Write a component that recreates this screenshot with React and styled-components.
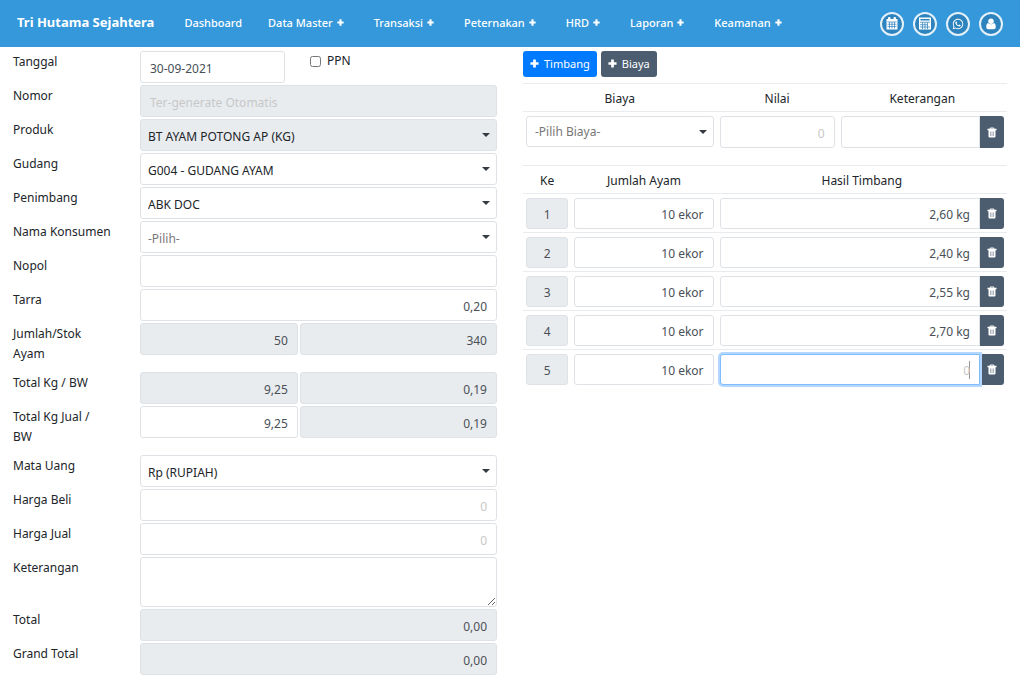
import React, { useState } from "react";
import styled, { createGlobalStyle, css } from "styled-components";
import { FaWhatsapp } from "react-icons/fa";

const GlobalStyle = createGlobalStyle`
  *, *::before, *::after {
    box-sizing: border-box;
  }
  body {
    margin: 0;
    background: #fff;
    color: #212529;
    font-family: "Noto Sans", "Open Sans", sans-serif;
    font-size: 12px;
    line-height: 20px;
  }
  input, select, textarea, button {
    font-family: inherit;
  }
`;

const Navbar = styled.header`
  display: flex;
  align-items: center;
  min-height: 47px;
  padding: 0 17px;
  background: #3498db;
`;
const Brand = styled.a`
  margin-right: 17px;
  padding-bottom: 3px;
  color: #fff;
  font-size: 13px;
  font-weight: 700;
  text-decoration: none;
  white-space: nowrap;
`;
const Menu = styled.nav`
  display: flex;
  flex: 1;
  padding-bottom: 2px;
`;
const MenuLink = styled.a`
  display: flex;
  align-items: center;
  gap: 4px;
  padding: 0 ${(props) => (props.$dropdown ? 17 : 13)}px 0 13px;
  color: #fff;
  font-size: 11px;
  font-weight: 500;
  text-decoration: none;
  white-space: nowrap;
`;
const RoundButtons = styled.div`
  display: flex;
  gap: 9px;
`;
const RoundButton = styled.button`
  display: flex;
  align-items: center;
  justify-content: center;
  width: 24px;
  height: 24px;
  padding: 0;
  border: 2px solid #e4f1fa;
  border-radius: 50%;
  background: #2d83bd;
  color: #fff;
`;

const Page = styled.main`
  display: grid;
  grid-template-columns: minmax(0, 1fr) minmax(0, 1fr);
  gap: 26px;
  padding: 4px 13px;
`;

const Row = styled.div`
  display: grid;
  grid-template-columns: 127px minmax(0, 1fr);
  align-items: start;
`;
const Label = styled.label`
  padding: 1px 13px 0 0;
  margin-bottom: 8px;
  white-space: pre-line;
`;
const Fields = styled.div`
  display: flex;
  gap: 2px;
  margin-bottom: 2px;
`;
const SplitFields = styled.div`
  display: grid;
  grid-template-columns: 4fr 5fr;
  gap: 2px;
  width: 100%;
`;
const control = css`
  width: 100%;
  min-width: 0;
  border: 1px solid #dee2e6;
  border-radius: 3px;
  background: #fff;
  color: #495057;
  font-size: 12px;
  line-height: 20px;
  outline: 0;
  &::placeholder {
    color: #c8c8c8;
    opacity: 1;
  }
  &:focus {
    position: relative;
    border-color: #80bdff;
    box-shadow: 0 0 0 2px #b3d7ff;
  }
  &:disabled,
  &:read-only:not(select) {
    background: #e9ecef;
    opacity: 1;
  }
`;
const Input = styled.input`
  ${control}
  height: ${(props) => (props.$compact ? 31 : 32)}px;
  padding: 2px 9px 0;
  text-align: ${(props) => props.$align || "left"};
`;
const WeightInput = styled(Input)`
  caret-color: transparent;
  &:focus {
    background: linear-gradient(#999, #999) right 9px center / 1px 18px no-repeat #fff;
  }
`;
const DateInput = styled(Input)`
  width: 145px;
`;
const TextArea = styled.textarea`
  ${control}
  display: block;
  height: 50px;
  padding: 4px 9px;
`;
const SelectWrap = styled.div`
  position: relative;
  width: 100%;
  &::after {
    content: "";
    position: absolute;
    top: 14px;
    right: 7px;
    border: 4px solid transparent;
    border-top-color: #343a40;
    border-bottom: 0;
    pointer-events: none;
  }
`;
const SelectBox = styled.select`
  ${control}
  display: block;
  height: ${(props) => (props.$compact ? 31 : 32)}px;
  padding: ${(props) => (props.$compact ? "0 20px 0 8px" : "4px 20px 0 7px")};
  color: ${(props) => (props.$muted ? "#777" : "#212529")};
  appearance: none;
`;
const CheckLabel = styled.label`
  display: flex;
  align-items: center;
  gap: 6px;
  height: 20px;
  margin-left: 23px;
`;
const Checkbox = styled.input`
  width: 11px;
  height: 11px;
  margin: 0;
`;

const Actions = styled.div`
  display: flex;
  gap: 4px;
  margin-bottom: 6px;
`;
const Button = styled.button`
  display: flex;
  align-items: center;
  gap: 5px;
  height: 26px;
  padding: 0 7px 1px;
  border: 0;
  border-radius: 3px;
  background: ${(props) => (props.$primary ? "#007bff" : "#4b5d6f")};
  color: #fff;
  font-size: 11px;
`;
const Table = styled.table`
  width: 100%;
  margin-bottom: 14px;
  border-collapse: collapse;
  table-layout: fixed;
`;
const Th = styled.th`
  width: ${(props) => props.$width};
  height: 28px;
  padding: 2px 0 0;
  border-top: 1px solid #e9ecef;
  border-bottom: 1px solid #e9ecef;
  font-weight: 400;
`;
const Td = styled.td`
  padding: 4px 3px 3px;
  border-top: 1px solid #e9ecef;
  vertical-align: top;
`;
const InputGroup = styled.div`
  display: flex;
  ${Input} {
    flex: 1;
    border-top-right-radius: 0;
    border-bottom-right-radius: 0;
  }
`;
const TrashButton = styled.button`
  display: flex;
  align-items: center;
  justify-content: center;
  width: 24px;
  padding: 0;
  border: 0;
  border-radius: 0 3px 3px 0;
  background: #4b5d6f;
  color: #fff;
`;

const PlusIcon = ({ size }) => (
  <svg width={size} height={size} viewBox="0 0 10 10" stroke="currentColor" strokeWidth="3">
    <path d="M5 0.500v9M0.500 5h9" />
  </svg>
);

const TrashIcon = () => (
  <svg width="10" height="11" viewBox="0 0 20 22" fill="none" stroke="currentColor">
    <path d="M6.500 5V2h7v3" strokeWidth="2" />
    <path d="M1 5h18" strokeWidth="3" />
    <path d="M3 6h14v13q0 2-2 2H5q-2 0-2-2z" fill="currentColor" stroke="none" />
    <path d="M7 9v9M10 9v9M13 9v9" stroke="#7c8b9a" strokeWidth="1.300" />
  </svg>
);

const CalendarIcon = () => (
  <svg width="12" height="13" viewBox="0 0 24 26" fill="currentColor">
    <path d="M1 4h22v21H1z" />
    <rect x="4" y="0" width="5" height="8" rx="2" />
    <rect x="15" y="0" width="5" height="8" rx="2" />
    <path
      d="M3 10h18M3 14.500h18M3 19h18M7 10v13M12 10v13M17 10v13"
      stroke="#2d83bd"
      strokeWidth="1.400"
    />
  </svg>
);

const CalculatorIcon = () => (
  <svg width="12" height="13" viewBox="0 0 24 26" fill="currentColor">
    <path d="M0 1h24v24H0z" />
    <path d="M3 4h18v3H3z" fill="#2d83bd" />
    <path
      d="M2 10.500h20M2 15.500h15M2 20h20M7 11v13M12 11v13M17 11v13"
      stroke="#2d83bd"
      strokeWidth="1.500"
    />
  </svg>
);

const UserIcon = () => (
  <svg width="10" height="12" viewBox="0 0 20 24" fill="currentColor">
    <circle cx="10" cy="6.500" r="5.500" />
    <path d="M4 10q6 5 12 0q3.500 1 3.500 8.500q0 4-4 4h-11q-4 0-4-4Q0.500 11 4 10z" />
  </svg>
);

const menu = [
  { text: "Dashboard" },
  { text: "Data Master", dropdown: true },
  { text: "Transaksi", dropdown: true },
  { text: "Peternakan", dropdown: true },
  { text: "HRD", dropdown: true },
  { text: "Laporan", dropdown: true },
  { text: "Keamanan", dropdown: true },
];

const Select = ({ option, ...props }) => (
  <SelectWrap>
    <SelectBox {...props}>
      <option>{option}</option>
    </SelectBox>
  </SelectWrap>
);

const Field = ({ id, label, children }) => (
  <Row>
    <Label htmlFor={id}>{label}</Label>
    <Fields>{children}</Fields>
  </Row>
);

const Trash = ({ label }) => (
  <TrashButton type="button" aria-label={label}>
    <TrashIcon />
  </TrashButton>
);

function SalesForm() {
  return (
    <form>
      <Field id="tanggal" label="Tanggal">
        <DateInput id="tanggal" defaultValue="30-09-2021" />
        <CheckLabel>
          <Checkbox type="checkbox" />
          PPN
        </CheckLabel>
      </Field>
      <Field id="nomor" label="Nomor">
        <Input id="nomor" placeholder="Ter-generate Otomatis" readOnly />
      </Field>
      <Field id="produk" label="Produk">
        <Select id="produk" option="BT AYAM POTONG AP (KG)" disabled />
      </Field>
      <Field id="gudang" label="Gudang">
        <Select id="gudang" option="G004 - GUDANG AYAM" />
      </Field>
      <Field id="penimbang" label="Penimbang">
        <Select id="penimbang" option="ABK DOC" />
      </Field>
      <Field id="konsumen" label="Nama Konsumen">
        <Select id="konsumen" option="-Pilih-" $muted />
      </Field>
      <Field id="nopol" label="Nopol">
        <Input id="nopol" />
      </Field>
      <Field id="tarra" label="Tarra">
        <Input id="tarra" $align="right" defaultValue="0,20" />
      </Field>
      <Field id="jumlah" label={"Jumlah/Stok\nAyam"}>
        <SplitFields>
          <Input id="jumlah" $align="right" value="50" readOnly />
          <Input aria-label="Stok Ayam" $align="right" value="340" readOnly />
        </SplitFields>
      </Field>
      <Field id="totalKg" label="Total Kg / BW">
        <SplitFields>
          <Input id="totalKg" $align="right" value="9,25" readOnly />
          <Input aria-label="BW" $align="right" value="0,19" readOnly />
        </SplitFields>
      </Field>
      <Field id="totalJual" label={"Total Kg Jual /\nBW"}>
        <SplitFields>
          <Input id="totalJual" $align="right" defaultValue="9,25" />
          <Input aria-label="BW Jual" $align="right" value="0,19" readOnly />
        </SplitFields>
      </Field>
      <Field id="mataUang" label="Mata Uang">
        <Select id="mataUang" option="Rp (RUPIAH)" />
      </Field>
      <Field id="hargaBeli" label="Harga Beli">
        <Input id="hargaBeli" $align="right" placeholder="0" />
      </Field>
      <Field id="hargaJual" label="Harga Jual">
        <Input id="hargaJual" $align="right" placeholder="0" />
      </Field>
      <Field id="keterangan" label="Keterangan">
        <TextArea id="keterangan" />
      </Field>
      <Field id="total" label="Total">
        <Input id="total" $align="right" value="0,00" readOnly />
      </Field>
      <Field id="grandTotal" label="Grand Total">
        <Input id="grandTotal" $align="right" value="0,00" readOnly />
      </Field>
    </form>
  );
}

function WeighingPanel() {
  const [rows, setRows] = useState(["2,60 kg", "2,40 kg", "2,55 kg", "2,70 kg", ""]);

  return (
    <section>
      <Actions>
        <Button type="button" $primary onClick={() => setRows([...rows, ""])}>
          <PlusIcon size={9} />
          Timbang
        </Button>
        <Button type="button">
          <PlusIcon size={9} />
          Biaya
        </Button>
      </Actions>
      <Table>
        <thead>
          <tr>
            <Th $width="40%">Biaya</Th>
            <Th $width="25%">Nilai</Th>
            <Th $width="35%">Keterangan</Th>
          </tr>
        </thead>
        <tbody>
          <tr>
            <Td>
              <Select aria-label="Biaya" option="-Pilih Biaya-" $muted $compact />
            </Td>
            <Td>
              <Input aria-label="Nilai" $align="right" placeholder="0" />
            </Td>
            <Td>
              <InputGroup>
                <Input aria-label="Keterangan biaya" />
                <Trash label="Hapus biaya" />
              </InputGroup>
            </Td>
          </tr>
        </tbody>
      </Table>
      <Table>
        <thead>
          <tr>
            <Th $width="10%">Ke</Th>
            <Th $width="30%">Jumlah Ayam</Th>
            <Th $width="60%">Hasil Timbang</Th>
          </tr>
        </thead>
        <tbody>
          {rows.map((weight, i) => (
            <tr key={i}>
              <Td>
                <Input aria-label="Ke" $compact $align="center" value={i + 1} readOnly />
              </Td>
              <Td>
                <Input
                  aria-label="Jumlah Ayam"
                  $compact
                  $align="right"
                  defaultValue="10 ekor"
                />
              </Td>
              <Td>
                <InputGroup>
                  <WeightInput
                    aria-label="Hasil Timbang"
                    $compact
                    $align="right"
                    placeholder="0"
                    defaultValue={weight}
                    autoFocus={i === rows.length - 1}
                  />
                  <Trash label="Hapus timbang" />
                </InputGroup>
              </Td>
            </tr>
          ))}
        </tbody>
      </Table>
    </section>
  );
}

export default function App() {
  return (
    <>
      <GlobalStyle />
      <Navbar>
        <Brand href="#">Tri Hutama Sejahtera</Brand>
        <Menu>
          {menu.map((item) => (
            <MenuLink key={item.text} href="#" $dropdown={item.dropdown}>
              {item.text}
              {item.dropdown && <PlusIcon size={7} />}
            </MenuLink>
          ))}
        </Menu>
        <RoundButtons>
          <RoundButton aria-label="Kalender">
            <CalendarIcon />
          </RoundButton>
          <RoundButton aria-label="Kalkulator">
            <CalculatorIcon />
          </RoundButton>
          <RoundButton aria-label="WhatsApp">
            <FaWhatsapp size={12} />
          </RoundButton>
          <RoundButton aria-label="Akun">
            <UserIcon />
          </RoundButton>
        </RoundButtons>
      </Navbar>
      <Page>
        <SalesForm />
        <WeighingPanel />
      </Page>
    </>
  );
}
